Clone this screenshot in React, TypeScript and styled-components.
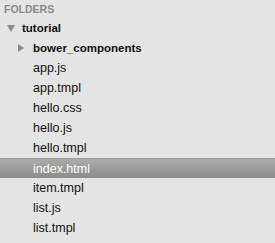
import React from 'react'
import styled, { createGlobalStyle } from 'styled-components'

const Global = createGlobalStyle`
  html, body {
    margin: 0;
    padding: 0;
    background: #e4e4e4;
  }
`

const Sidebar = styled.div`
  width: 275px;
  height: 243px;
  background: #e4e4e4;
  font-family: 'Liberation Sans', Arial, sans-serif;
  overflow: hidden;
`

const Header = styled.div`
  height: 18px;
  line-height: 18px;
  padding-left: 4px;
  font-size: 10.5px;
  font-weight: 700;
  color: #8a8a8a;
`

const Row = styled.div<{ $indent: number; $selected?: boolean }>`
  height: 20px;
  display: flex;
  align-items: center;
  padding-left: ${(p) => p.$indent}px;
  box-sizing: border-box;
  color: ${(p) => (p.$selected ? '#fff' : '#111')};
  background: ${(p) =>
    p.$selected ? 'linear-gradient(to bottom, #ababab, #8b8b8b)' : 'transparent'};
  border-top: ${(p) => (p.$selected ? '1px solid #9e9e9e' : 'none')};
`

const Arrow = styled.span<{ $w: number }>`
  width: ${(p) => p.$w}px;
  display: flex;
  align-items: center;
`

const Label = styled.span<{ $bold?: boolean }>`
  font-size: ${(p) => (p.$bold ? '11.5px' : '12.5px')};
  font-weight: ${(p) => (p.$bold ? 700 : 400)};
  white-space: nowrap;
`

const Down = () => (
  <svg width="8" height="7" viewBox="0 0 8 7">
    <polygon points="0,0 8,0 4,7" fill="#8c8c8c" />
  </svg>
)

const Right = () => (
  <svg width="6" height="8" viewBox="0 0 6 8">
    <polygon points="0,0 6,4 0,8" fill="#8c8c8c" />
  </svg>
)

const files = [
  'app.js',
  'app.tmpl',
  'hello.css',
  'hello.js',
  'hello.tmpl',
  'index.html',
  'item.tmpl',
  'list.js',
  'list.tmpl',
]

export default function App() {
  return (
    <Sidebar>
      <Global />
      <Header>FOLDERS</Header>
      <Row $indent={7}>
        <Arrow $w={15}>
          <Down />
        </Arrow>
        <Label $bold>tutorial</Label>
      </Row>
      <Row $indent={18}>
        <Arrow $w={15}>
          <Right />
        </Arrow>
        <Label $bold>bower_components</Label>
      </Row>
      {files.map((f) => (
        <Row key={f} $indent={33} $selected={f === 'index.html'}>
          <Label>{f}</Label>
        </Row>
      ))}
    </Sidebar>
  )
}
